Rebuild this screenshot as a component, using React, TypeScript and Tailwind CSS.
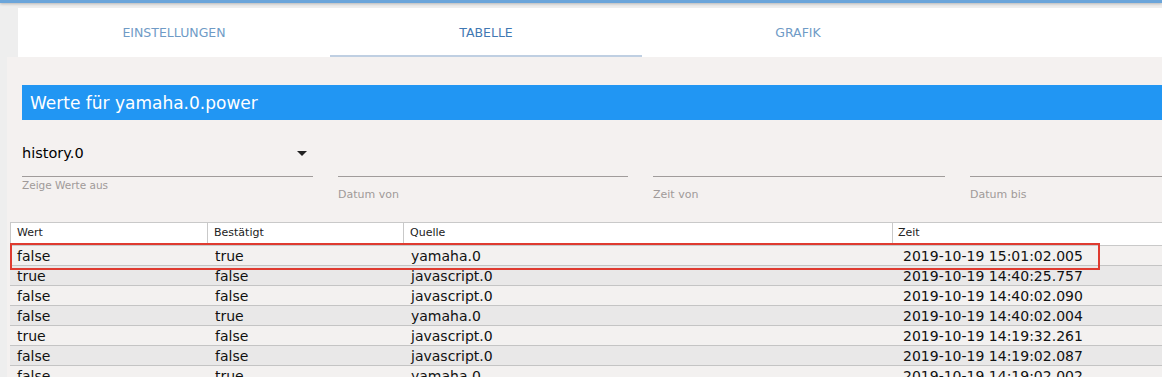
import React from "react";

const rows = [
  ["false", "true", "yamaha.0", "2019-10-19 15:01:02.005"],
  ["true", "false", "javascript.0", "2019-10-19 14:40:25.757"],
  ["false", "false", "javascript.0", "2019-10-19 14:40:02.090"],
  ["false", "true", "yamaha.0", "2019-10-19 14:40:02.004"],
  ["true", "false", "javascript.0", "2019-10-19 14:19:32.261"],
  ["false", "false", "javascript.0", "2019-10-19 14:19:02.087"],
  ["false", "true", "yamaha.0", "2019-10-19 14:19:02.002"],
];

const font = { fontFamily: '"DejaVu Sans", Verdana, sans-serif' };

export default function App() {
  return (
    <div className="w-[1162px] h-[377px] overflow-hidden bg-[#eeeeee]" style={font}>
      <div className="h-[3px] bg-[#6ba5da] shadow-[0_1px_3px_rgba(0,0,0,0.25)]" />
      <div className="h-[5px]" />
      <div className="ml-[18px] h-[49px] bg-white flex">
        <div className="w-[312px] flex items-center justify-center pt-[2px] text-[12.5px] text-[#6f9bc6]">EINSTELLUNGEN</div>
        <div className="w-[312px] flex flex-col">
          <div className="flex-1 flex items-center justify-center pt-[4px] text-[12.5px] text-[#3f78b3]">TABELLE</div>
          <div className="h-[2px] bg-[#bfcfe2]" />
        </div>
        <div className="w-[312px] flex items-center justify-center pt-[2px] text-[12.5px] text-[#6f9bc6]">GRAFIK</div>
      </div>
      <div className="ml-[7px] bg-[#f4f1f0] h-[320px] pt-[28px]">
        <div className="ml-[15px] h-[35px] bg-[#2196f3] flex items-center pl-[8px] pt-[3px] text-white text-[17px]">
          Werte für yamaha.0.power
        </div>
        <div className="ml-[15px] mt-[22px] flex gap-[25px]">
          <div className="w-[291px] flex flex-col">
            <div className="h-[35px] flex items-start justify-between border-b border-[#a09c9b] pr-[6px] pt-[1px]">
              <span className="text-[14.5px] leading-[20px] text-black">history.0</span>
              <svg className="mt-[8px]" width="10" height="5" viewBox="0 0 10 5"><path d="M0 0 L10 0 L5 5 Z" fill="#222" /></svg>
            </div>
            <div className="mt-[1px] text-[10.5px] text-[#a09a99]">Zeige Werte aus</div>
          </div>
          <div className="w-[290px] flex flex-col">
            <div className="h-[35px] border-b border-[#a09c9b]" />
            <div className="mt-[10px] text-[11px] text-[#a09a99]">Datum von</div>
          </div>
          <div className="w-[292px] flex flex-col">
            <div className="h-[35px] border-b border-[#a09c9b]" />
            <div className="mt-[10px] text-[11px] text-[#a09a99]">Zeit von</div>
          </div>
          <div className="flex-1 flex flex-col">
            <div className="h-[35px] border-b border-[#a09c9b]" />
            <div className="mt-[10px] text-[11px] text-[#a09a99]">Datum bis</div>
          </div>
        </div>
        <div className="relative ml-[3px] mt-[18px]">
          <div className="flex h-[24px] bg-white border-t border-b border-[#c9c9c9] text-[11px] text-[#222]">
            <div className="w-[198px] border-l border-r border-[#c9c9c9] pl-[6px] flex items-center">Wert</div>
            <div className="w-[196px] border-r border-[#c9c9c9] pl-[6px] flex items-center">Bestätigt</div>
            <div className="w-[489px] border-r border-[#c9c9c9] pl-[6px] flex items-center">Quelle</div>
            <div className="flex-1 pl-[5px] flex items-center">Zeit</div>
          </div>
          {rows.map((r, i) => (
            <div
              key={i}
              className={`flex h-[20px] border-b border-[#c4c4c4] text-[14px] text-[#111] leading-none ${i % 2 === 1 ? "bg-[#e9e8e8]" : "bg-[#f3f1f0]"}`}
            >
              <div className="w-[198px] pl-[7px] pt-[2px] flex items-center">{r[0]}</div>
              <div className="w-[196px] pl-[7px] pt-[2px] flex items-center">{r[1]}</div>
              <div className="w-[489px] pl-[7px] pt-[2px] flex items-center">{r[2]}</div>
              <div className="flex-1 pl-[10px] pt-[2px] flex items-center">{r[3]}</div>
            </div>
          ))}
          <div className="absolute left-0 top-[21px] w-[1090px] h-[27px] border-2 border-[#df3b30]" />
        </div>
      </div>
    </div>
  );
}
